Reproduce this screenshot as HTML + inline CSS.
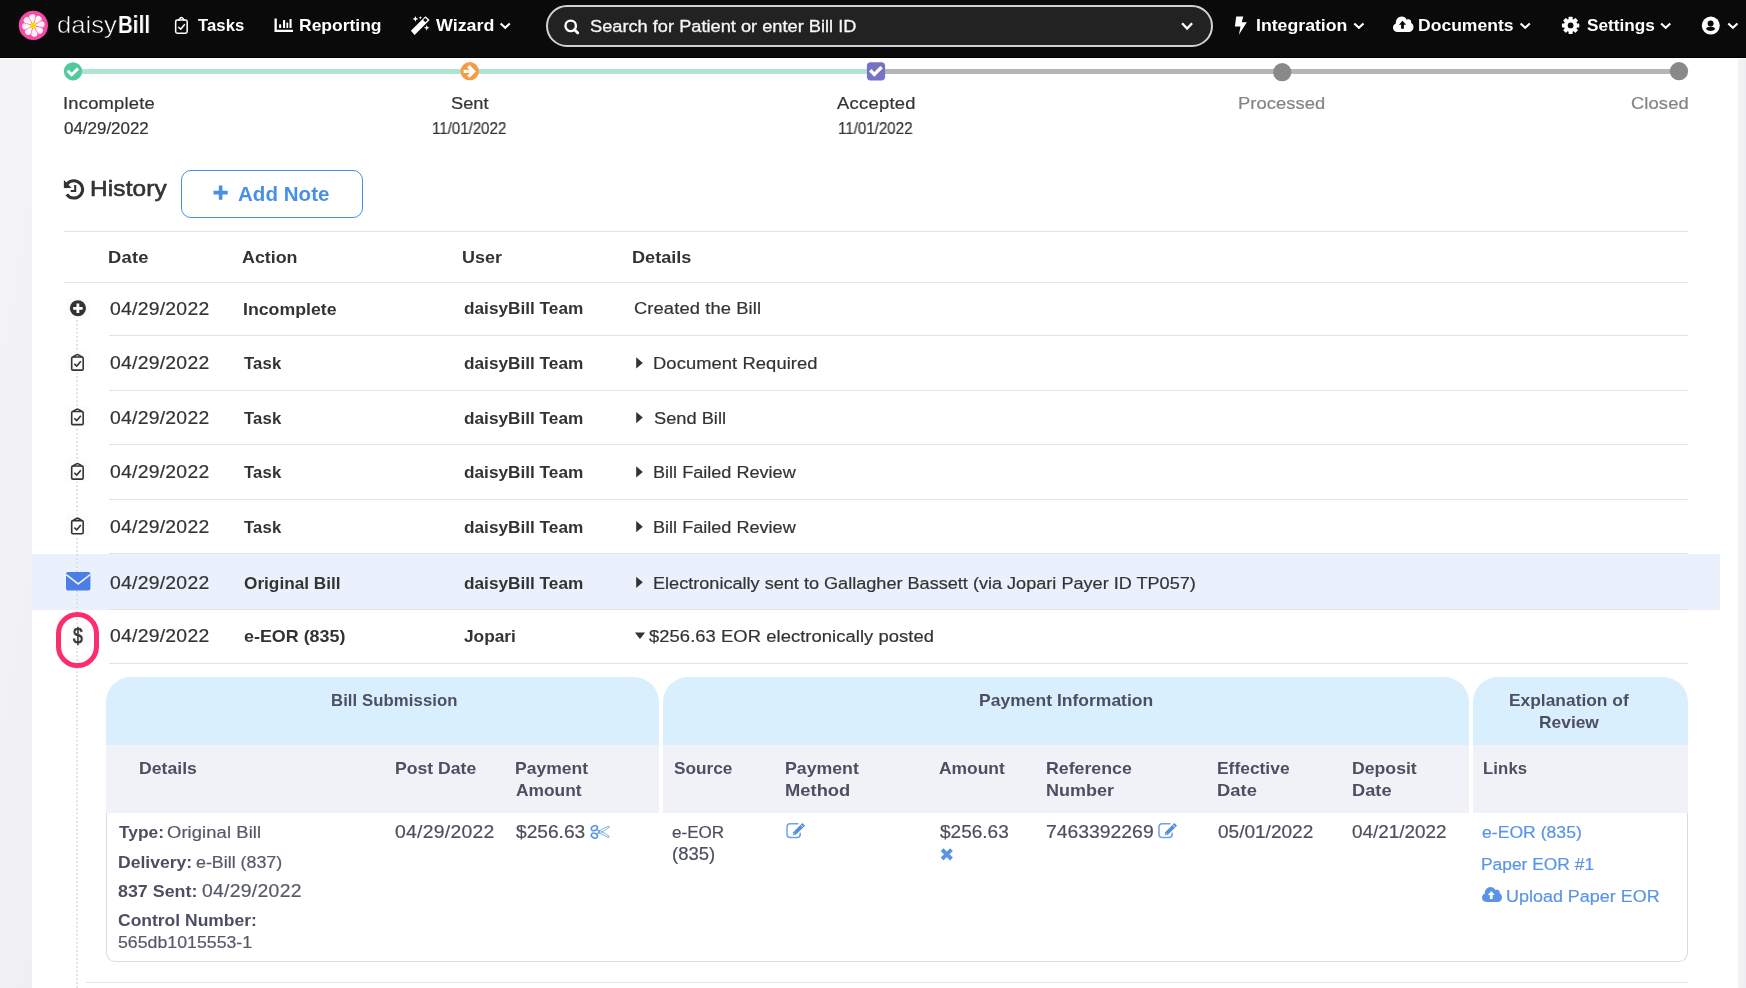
<!DOCTYPE html>
<html lang="en"><head><meta charset="utf-8"><title>daisyBill - Bill History</title>
<style>
*{box-sizing:border-box;margin:0;padding:0}
html,body{width:1746px;height:988px;overflow:hidden;background:#fff}
body{position:relative;font-family:"Liberation Sans",sans-serif;color:#333}
.t{position:absolute;white-space:nowrap;line-height:20px;height:20px;transform-origin:0 50%;will-change:transform}
.i{position:absolute;overflow:visible}
.b{position:absolute}
nav{position:absolute;left:0;top:0;width:1746px;height:57.7px;background:#0a0a0a;border-bottom:1px solid #000}
.search{left:546.2px;top:5.2px;width:666.5px;height:41.6px;border:2px solid #d2d2d2;border-radius:21px;background:#222}
.gl{left:0;top:59px;width:31.9px;height:929px;background:linear-gradient(100deg,#f4f4f7,#f0f0f3)}
.gr{left:1738px;top:59px;width:8px;height:929px;background:linear-gradient(90deg,#f3f3f5,#efeff1)}
.ln{position:absolute;height:1px;background:#e4e4e6}
.hl{left:32px;top:553.6px;width:1688px;height:56px;background:#eaf1fd}

.ib{position:absolute;background:#fcfcfc}
.btn{left:181.2px;top:170.3px;width:181.4px;height:47.4px;border:1.2px solid #4a90e2;border-radius:10px;background:#fff}
.pill{left:55.7px;top:612.2px;width:43.4px;height:56.2px;border:5.4px solid #fb2d6c;border-radius:21.7px}
.ph{position:absolute;top:677px;height:67.8px;background:#d9effe;border-radius:25px 25px 0 0}
.psh{position:absolute;top:744.7px;height:68.2px;background:#f1f2f8}
.pbody{left:106.2px;top:812.9px;width:1581.6px;height:148.8px;border:1px solid #dadae2;border-top:0;border-radius:0 0 9px 9px}
</style></head>
<body>
<div class="b gl"></div><div class="b gr"></div>
<nav><svg class="i" style="left:18px;top:10px" width="32" height="32"><g transform="translate(0.350 0.400)"><defs><linearGradient id="pg" gradientUnits="userSpaceOnUse" x1="12" y1="0" x2="18.2" y2="0"><stop offset="0" stop-color="#ffffff"/><stop offset=".55" stop-color="#fff4fa"/><stop offset="1" stop-color="#ffc9e4"/></linearGradient></defs><circle cx="15" cy="15" r="14.6" fill="#f84aa8"/><path transform="rotate(-6 15 15)" d="M15 14.5 C14.1 11 11.5 7.6 11.9 5.6 C12.3 3.1 17.7 3.1 18.1 5.6 C18.5 7.6 15.9 11 15 14.5Z" fill="url(#pg)"/><path transform="rotate(39 15 15)" d="M15 14.5 C14.1 11 11.5 7.6 11.9 5.6 C12.3 3.1 17.7 3.1 18.1 5.6 C18.5 7.6 15.9 11 15 14.5Z" fill="url(#pg)"/><path transform="rotate(84 15 15)" d="M15 14.5 C14.1 11 11.5 7.6 11.9 5.6 C12.3 3.1 17.7 3.1 18.1 5.6 C18.5 7.6 15.9 11 15 14.5Z" fill="url(#pg)"/><path transform="rotate(129 15 15)" d="M15 14.5 C14.1 11 11.5 7.6 11.9 5.6 C12.3 3.1 17.7 3.1 18.1 5.6 C18.5 7.6 15.9 11 15 14.5Z" fill="url(#pg)"/><path transform="rotate(174 15 15)" d="M15 14.5 C14.1 11 11.5 7.6 11.9 5.6 C12.3 3.1 17.7 3.1 18.1 5.6 C18.5 7.6 15.9 11 15 14.5Z" fill="url(#pg)"/><path transform="rotate(219 15 15)" d="M15 14.5 C14.1 11 11.5 7.6 11.9 5.6 C12.3 3.1 17.7 3.1 18.1 5.6 C18.5 7.6 15.9 11 15 14.5Z" fill="url(#pg)"/><path transform="rotate(264 15 15)" d="M15 14.5 C14.1 11 11.5 7.6 11.9 5.6 C12.3 3.1 17.7 3.1 18.1 5.6 C18.5 7.6 15.9 11 15 14.5Z" fill="url(#pg)"/><path transform="rotate(309 15 15)" d="M15 14.5 C14.1 11 11.5 7.6 11.9 5.6 C12.3 3.1 17.7 3.1 18.1 5.6 C18.5 7.6 15.9 11 15 14.5Z" fill="url(#pg)"/><circle cx="14.8" cy="15.1" r="2.9" fill="#ffd700"/></g></svg><svg class="i" style="left:174px;top:16px" width="16" height="20"><g transform="translate(0.800 0.600) scale(0.9450 0.9449)"><g fill="none" stroke="#fff" stroke-width="1.64" stroke-linejoin="round" stroke-linecap="round"><rect x="0.9" y="3.6" width="12.2" height="14" rx="1.8"/><path d="M4.2 3.5 L5.9 1.5 Q7 0.3 8.1 1.5 L9.8 3.5"/><path d="M3.7 11 L6.3 13.3 L10.6 8.2" stroke-linejoin="miter" stroke-linecap="butt"/></g></g></svg><svg class="i" style="left:274px;top:18px" width="21" height="16"><g transform="translate(0.000 0.000)"><g fill="#fff"><path d="M0.5 0.5h2.3v11.3h16.2v2.3H0.5z"/><rect x="5.1" y="6.2" width="2.1" height="3.9" rx=".5"/><rect x="9" y="2.1" width="2.1" height="8" rx=".5"/><rect x="12.4" y="4.4" width="1.8" height="5.7" rx=".5"/><rect x="15.5" y="0.9" width="2.1" height="9.2" rx=".5"/></g></g></svg><svg class="i" style="left:410px;top:14px" width="22" height="23"><g transform="translate(0.000 0.600)"><g fill="#fff"><path fill-rule="evenodd" d="M0.9 16.1 L15.5 1.7 L19.6 5.3 L4.6 20.5 Z M13.1 5.5 L15.3 3.4 L17.6 5.5 L15.4 7.7 Z"/><path d="M5.4 1.4L6.212 3.488L8.3 4.3L6.212 5.112L5.4 7.2L4.588 5.112L2.5 4.3L4.588 3.488Z"/><path d="M10.4 1.4L10.876 2.624L12.1 3.1L10.876 3.576L10.4 4.8L9.924 3.576L8.7 3.1L9.924 2.624Z"/><path d="M16.7 10.3L17.512 12.388L19.6 13.2L17.512 14.012L16.7 16.1L15.888 14.012L13.8 13.2L15.888 12.388Z"/></g></g></svg><svg class="i" style="left:498px;top:21px" width="15" height="11"><g transform="translate(1.900 1.600)"><path d="M0.7 0.9 L5.3 5.2 L9.9 0.9" fill="none" stroke="#fff" stroke-width="2.1" stroke-linecap="butt" stroke-linejoin="miter"/></g></svg><div class="b search"></div><svg class="i" style="left:564px;top:20px" width="17" height="16"><g transform="translate(0.000 0.000)"><g fill="none" stroke="#fff"><circle cx="6.7" cy="5.9" r="5.25" stroke-width="2.4"/><path d="M10.6 9.7 L13.8 13" stroke-width="2.7" stroke-linecap="round"/></g></g></svg><svg class="i" style="left:1180px;top:21px" width="15" height="11"><g transform="translate(1.400 1.400)"><path d="M0.7 0.9 L5.7 6.2 L10.7 0.9" fill="none" stroke="#fff" stroke-width="2.4" stroke-linecap="butt" stroke-linejoin="miter"/></g></svg><svg class="i" style="left:1234px;top:16px" width="15" height="21"><g transform="translate(0.300 0.400)"><path d="M1.9 0.2 L9 0.2 L7.4 5.9 L12.5 5.9 L4.6 18.4 L6.2 10.1 L0.6 10.1 Z" fill="#fff"/></g></svg><svg class="i" style="left:1352px;top:21px" width="15" height="11"><g transform="translate(1.600 1.600)"><path d="M0.7 0.9 L5.3 5.2 L9.9 0.9" fill="none" stroke="#fff" stroke-width="2.1" stroke-linecap="butt" stroke-linejoin="miter"/></g></svg><svg class="i" style="left:1393px;top:16px" width="22" height="17"><g transform="translate(0.000 0.600)"><path d="M4.4 15.4 C1.9 15.4 0 13.5 0 11.1 C0 9.2 1.1 7.6 2.8 7 C2.6 3.2 5.2 0 8.7 0 C10.9 0 12.7 1.2 13.7 3.1 C14.3 2.8 14.9 2.7 15.5 2.7 C17.3 2.7 18.6 4.3 18.2 6.4 C19.6 7.1 20.5 8.6 20.5 10.4 C20.5 13.2 18.5 15.4 15.8 15.4 Z" fill="#fff"/><path d="M9.5 4.2 L13.1 8.2 L10.9 8.2 L10.9 12.2 L8.1 12.2 L8.1 8.2 L5.9 8.2 Z" fill="#0a0a0a"/></g></svg><svg class="i" style="left:1518px;top:21px" width="15" height="11"><g transform="translate(1.900 1.600)"><path d="M0.7 0.9 L5.3 5.2 L9.9 0.9" fill="none" stroke="#fff" stroke-width="2.1" stroke-linecap="butt" stroke-linejoin="miter"/></g></svg><svg class="i" style="left:1561px;top:16px" width="20" height="20"><g transform="translate(0.800 0.600)"><g fill="#fff"><rect x="6.8" y="0.1" width="4" height="5" rx=".6" transform="rotate(0 8.8 8.8)"/><rect x="6.8" y="0.1" width="4" height="5" rx=".6" transform="rotate(45 8.8 8.8)"/><rect x="6.8" y="0.1" width="4" height="5" rx=".6" transform="rotate(90 8.8 8.8)"/><rect x="6.8" y="0.1" width="4" height="5" rx=".6" transform="rotate(135 8.8 8.8)"/><rect x="6.8" y="0.1" width="4" height="5" rx=".6" transform="rotate(180 8.8 8.8)"/><rect x="6.8" y="0.1" width="4" height="5" rx=".6" transform="rotate(225 8.8 8.8)"/><rect x="6.8" y="0.1" width="4" height="5" rx=".6" transform="rotate(270 8.8 8.8)"/><rect x="6.8" y="0.1" width="4" height="5" rx=".6" transform="rotate(315 8.8 8.8)"/><path fill-rule="evenodd" d="M2.2 8.8a6.6 6.6 0 1 0 13.2 0a6.6 6.6 0 1 0 -13.2 0Z M5.9 8.8a2.9 2.9 0 1 1 5.8 0a2.9 2.9 0 1 1 -5.8 0Z"/></g></g></svg><svg class="i" style="left:1659px;top:21px" width="15" height="11"><g transform="translate(1.400 1.600)"><path d="M0.7 0.9 L5.3 5.2 L9.9 0.9" fill="none" stroke="#fff" stroke-width="2.1" stroke-linecap="butt" stroke-linejoin="miter"/></g></svg><svg class="i" style="left:1701px;top:16px" width="20" height="20"><g transform="translate(0.600 0.400)"><circle cx="9.2" cy="9.2" r="9" fill="#fff"/><circle cx="9" cy="7" r="3" fill="#0a0a0a"/><path d="M4.4 12.6 C5 10.8 7 10.4 9 10.4 C11 10.4 13 10.8 13.6 12.6 C12.5 13.9 10.8 14.6 9 14.6 C7.2 14.6 5.5 13.9 4.4 12.6Z" fill="#0a0a0a"/></g></svg><svg class="i" style="left:1726px;top:21px" width="15" height="11"><g transform="translate(1.600 1.600)"><path d="M0.7 0.9 L5.3 5.2 L9.9 0.9" fill="none" stroke="#fff" stroke-width="2.1" stroke-linecap="butt" stroke-linejoin="miter"/></g></svg>
<span class="t" style="left:56.7px;top:15px;font-size:24px;color:#ffffff;letter-spacing:-0.0px;-webkit-text-stroke:.55px #0a0a0a;transform:scaleX(1.0692)">daisy</span>
<span class="t" style="left:117.51px;top:15px;font-size:24.4px;color:#ffffff;letter-spacing:0.0px;font-weight:700;transform:scaleX(0.8431)">Bill</span>
<span class="t" style="left:198.0px;top:16px;font-size:16.7px;color:#ffffff;letter-spacing:0.041px;font-weight:700">Tasks</span>
<span class="t" style="left:298.81px;top:16px;font-size:16.7px;color:#ffffff;letter-spacing:0.0px;font-weight:700;transform:scaleX(1.0477)">Reporting</span>
<span class="t" style="left:436.0px;top:16px;font-size:16.7px;color:#ffffff;letter-spacing:0.0px;font-weight:700;transform:scaleX(1.0687)">Wizard</span>
<span class="t" style="left:589.53px;top:17px;font-size:16.7px;color:#f6f6f6;letter-spacing:0.0px;-webkit-text-stroke:.3px #f6f6f6;transform:scaleX(1.0921)">Search for Patient or enter Bill ID</span>
<span class="t" style="left:1255.79px;top:16px;font-size:16.7px;color:#ffffff;letter-spacing:0.0px;font-weight:700;transform:scaleX(1.0601)">Integration</span>
<span class="t" style="left:1417.8px;top:16px;font-size:16.7px;color:#ffffff;letter-spacing:0.0px;font-weight:700;transform:scaleX(1.0514)">Documents</span>
<span class="t" style="left:1586.63px;top:16px;font-size:16.7px;color:#ffffff;letter-spacing:0.0px;font-weight:700;transform:scaleX(1.0317)">Settings</span></nav>
<main>
<section><div class="b " style="left:73px;top:69.1px;width:803px;height:4.7px;background:#b2e2d1"></div><div class="b " style="left:876px;top:69.1px;width:803px;height:4.7px;background:#b6b6b6"></div><svg class="i" style="left:63px;top:62px" width="21" height="20"><g transform="translate(0.800 0.100)"><circle cx="9.2" cy="9.2" r="9.15" fill="#54c99f"/><path d="M3.9 8.55 L7.85 12.65 L14.2 6.55" fill="none" stroke="#fff" stroke-width="2.9" stroke-linecap="butt" stroke-linejoin="miter"/></g></svg><svg class="i" style="left:460px;top:62px" width="20" height="20"><g transform="translate(0.550 0.000)"><circle cx="9.2" cy="9.2" r="9.15" fill="#f39c43"/><path d="M3 9.4 H12.4" stroke="#fff" stroke-width="3.1" fill="none"/><path d="M7.8 4.2 L13 9.4 L7.8 14.6" fill="none" stroke="#fff" stroke-width="3.4" stroke-linecap="butt" stroke-linejoin="miter"/></g></svg><svg class="i" style="left:866px;top:62px" width="21" height="20"><g transform="translate(0.800 0.100)"><rect x="0.1" y="0.1" width="18.2" height="18.3" rx="3.7" fill="#7673c6"/><path d="M3.4 8.2 L7.55 12.3 L14.8 5" fill="none" stroke="#fff" stroke-width="3.4" stroke-linecap="butt" stroke-linejoin="miter"/></g></svg><svg class="i" style="left:1273px;top:63px" width="20" height="20"><g transform="translate(0.000 0.000)"><circle cx="9.2" cy="9.2" r="9.1" fill="#898989"/></g></svg><svg class="i" style="left:1669px;top:62px" width="21" height="20"><g transform="translate(0.800 0.000)"><circle cx="9.2" cy="9.2" r="9.1" fill="#898989"/></g></svg>
<span class="t" style="left:62.96px;top:94px;font-size:16.7px;color:#333333;letter-spacing:0.194px;-webkit-text-stroke-width:.2px;transform:scaleX(1.1)">Incomplete</span>
<span class="t" style="left:63.87px;top:119px;font-size:15.6px;color:#333333;letter-spacing:0.0px;-webkit-text-stroke-width:.2px;transform:scaleX(1.0863)">04/29/2022</span>
<span class="t" style="left:450.93px;top:94px;font-size:16.7px;color:#333333;letter-spacing:0.0px;-webkit-text-stroke-width:.2px;transform:scaleX(1.0918)">Sent</span>
<span class="t" style="left:432.26px;top:119px;font-size:15.6px;color:#333333;letter-spacing:0.0px;-webkit-text-stroke-width:.2px;transform:scaleX(0.9667)">11/01/2022</span>
<span class="t" style="left:837.0px;top:94px;font-size:16.7px;color:#333333;letter-spacing:0.252px;-webkit-text-stroke-width:.2px;transform:scaleX(1.1)">Accepted</span>
<span class="t" style="left:838.35px;top:119px;font-size:15.6px;color:#333333;letter-spacing:0.0px;-webkit-text-stroke-width:.2px;transform:scaleX(0.9693)">11/01/2022</span>
<span class="t" style="left:1238.16px;top:94px;font-size:16.7px;color:#848484;letter-spacing:0.043px;-webkit-text-stroke-width:.2px;transform:scaleX(1.1)">Processed</span>
<span class="t" style="left:1630.64px;top:94px;font-size:16.7px;color:#848484;letter-spacing:0.093px;-webkit-text-stroke-width:.2px;transform:scaleX(1.1)">Closed</span></section>
<section><svg class="i" style="left:63px;top:179px" width="23" height="23"><g transform="translate(0.600 0.200)"><g fill="none" stroke="#333"><path d="M1.73 8.69 A8.7 8.7 0 1 1 3.17 15.19" stroke-width="3"/><path d="M11.6 5.9 V11.8 H7.1" stroke-width="2.1"/></g><path d="M0.3 0.8 L0.3 8.8 L8 8.8 Z" fill="#333"/></g></svg><div class="b btn"></div><svg class="i" style="left:213px;top:185px" width="17" height="17"><g transform="translate(0.200 0.200)"><path d="M5.6 0.3h3.6v5.3h5.3v3.6h-5.3v5.3h-3.6v-5.3h-5.3v-3.6h5.3z" fill="#4a90e2"/></g></svg>
<span class="t" style="left:89.99px;top:179px;font-size:22.2px;color:#333333;letter-spacing:0.126px;-webkit-text-stroke:.6px #333;transform:scaleX(1.1)">History</span>
<span class="t" style="left:238.08px;top:184px;font-size:20.5px;color:#4a90e2;letter-spacing:0.047px;font-weight:700">Add Note</span>
<div class="ln" style="left:64px;top:230.7px;width:1624px"></div><div class="ln" style="left:64px;top:281.8px;width:1624px"></div><div class="ln" style="left:109px;top:334.7px;width:1579px"></div><div class="ln" style="left:109px;top:389.7px;width:1579px"></div><div class="ln" style="left:109px;top:443.7px;width:1579px"></div><div class="ln" style="left:109px;top:498.7px;width:1579px"></div><div class="ln" style="left:109px;top:662.7px;width:1579px"></div><div class="b hl"></div><svg class="i" style="left:76px;top:319px" width="3" height="671"><g transform="translate(0.200 0.900)"><line x1="0.85" y1="0" x2="0.85" y2="669" stroke="#dbdada" stroke-width="1.7" stroke-dasharray="1.7 2.34" stroke-dashoffset="-3.9"/></g></svg><div class="ln" style="left:109px;top:552.7px;width:1579px"></div><div class="ln" style="left:109px;top:608.7px;width:1579px"></div>
<span class="t" style="left:107.85px;top:248px;font-size:16.7px;color:#333333;letter-spacing:0.239px;font-weight:700;transform:scaleX(1.1)">Date</span>
<span class="t" style="left:242.32px;top:248px;font-size:16.7px;color:#333333;letter-spacing:-0.0px;font-weight:700;transform:scaleX(1.0691)">Action</span>
<span class="t" style="left:462.46px;top:248px;font-size:16.7px;color:#333333;letter-spacing:0.0px;font-weight:700;transform:scaleX(1.0771)">User</span>
<span class="t" style="left:632.27px;top:248px;font-size:16.7px;color:#333333;letter-spacing:0.0px;font-weight:700;transform:scaleX(1.0859)">Details</span>
<div><div class="ib" style="left:66.4px;top:298.3px;width:22.4px;height:21.2px"></div><svg class="i" style="left:70px;top:300px" width="17" height="18"><g transform="translate(0.100 0.500)"><circle cx="7.8" cy="7.8" r="8.05" fill="#333"/><path d="M6.4 3.1h2.8v3.3h3.3v2.8h-3.3v3.3h-2.8v-3.3h-3.3v-2.8h3.3z" fill="#fff"/></g></svg>
<span class="t" style="left:109.59px;top:299px;font-size:17.6px;color:#333333;letter-spacing:0.232px;-webkit-text-stroke-width:.2px;transform:scaleX(1.1)">04/29/2022</span>
<span class="t" style="left:243.09px;top:300px;font-size:16.7px;color:#333333;letter-spacing:0.0px;font-weight:700;transform:scaleX(1.0623)">Incomplete</span>
<span class="t" style="left:463.86px;top:299px;font-size:16.7px;color:#333333;letter-spacing:0.0px;font-weight:700;transform:scaleX(1.0318)">daisyBill Team</span>
<span class="t" style="left:634.14px;top:299px;font-size:16.7px;color:#333333;letter-spacing:0.09px;-webkit-text-stroke-width:.2px;transform:scaleX(1.1)">Created the Bill</span></div>
<div><div class="ib" style="left:66.0px;top:351.1px;width:22.8px;height:21.7px"></div><svg class="i" style="left:70px;top:353px" width="16" height="19"><g transform="translate(0.850 0.600) scale(0.9400 0.9400)"><g fill="none" stroke="#333" stroke-width="1.7" stroke-linejoin="round" stroke-linecap="round"><rect x="0.9" y="3.6" width="12.2" height="14" rx="1.3"/><path d="M2.6 3.4 L5.9 1.3 Q7 0.5 8.1 1.3 L11.4 3.4"/><path d="M3.7 11 L6.3 13.3 L10.6 8.2" stroke-linejoin="miter" stroke-linecap="butt"/></g></g></svg><svg class="i" style="left:635px;top:356px" width="10" height="15"><g transform="translate(0.800 0.700)"><path d="M0.4 0.6 L7 6.2 L0.4 11.8Z" fill="#333"/></g></svg>
<span class="t" style="left:109.59px;top:353px;font-size:17.6px;color:#333333;letter-spacing:0.232px;-webkit-text-stroke-width:.2px;transform:scaleX(1.1)">04/29/2022</span>
<span class="t" style="left:244.2px;top:354px;font-size:16.7px;color:#333333;letter-spacing:0.123px;font-weight:700">Task</span>
<span class="t" style="left:463.86px;top:354px;font-size:16.7px;color:#333333;letter-spacing:0.0px;font-weight:700;transform:scaleX(1.0318)">daisyBill Team</span>
<span class="t" style="left:652.96px;top:354px;font-size:16.7px;color:#333333;letter-spacing:0.073px;-webkit-text-stroke-width:.2px;transform:scaleX(1.1)">Document Required</span></div>
<div><div class="ib" style="left:66.0px;top:405.6px;width:22.8px;height:21.7px"></div><svg class="i" style="left:70px;top:408px" width="16" height="19"><g transform="translate(0.850 0.100) scale(0.9400 0.9400)"><g fill="none" stroke="#333" stroke-width="1.7" stroke-linejoin="round" stroke-linecap="round"><rect x="0.9" y="3.6" width="12.2" height="14" rx="1.3"/><path d="M2.6 3.4 L5.9 1.3 Q7 0.5 8.1 1.3 L11.4 3.4"/><path d="M3.7 11 L6.3 13.3 L10.6 8.2" stroke-linejoin="miter" stroke-linecap="butt"/></g></g></svg><svg class="i" style="left:635px;top:411px" width="10" height="14"><g transform="translate(0.800 0.400)"><path d="M0.4 0.6 L7 6.2 L0.4 11.8Z" fill="#333"/></g></svg>
<span class="t" style="left:109.59px;top:408px;font-size:17.6px;color:#333333;letter-spacing:0.232px;-webkit-text-stroke-width:.2px;transform:scaleX(1.1)">04/29/2022</span>
<span class="t" style="left:244.2px;top:409px;font-size:16.7px;color:#333333;letter-spacing:0.123px;font-weight:700">Task</span>
<span class="t" style="left:463.86px;top:409px;font-size:16.7px;color:#333333;letter-spacing:0.0px;font-weight:700;transform:scaleX(1.0318)">daisyBill Team</span>
<span class="t" style="left:653.83px;top:409px;font-size:16.7px;color:#333333;letter-spacing:0.0px;-webkit-text-stroke-width:.2px;transform:scaleX(1.0935)">Send Bill</span></div>
<div><div class="ib" style="left:66.0px;top:460.1px;width:22.8px;height:21.7px"></div><svg class="i" style="left:70px;top:462px" width="16" height="19"><g transform="translate(0.850 0.600) scale(0.9400 0.9400)"><g fill="none" stroke="#333" stroke-width="1.7" stroke-linejoin="round" stroke-linecap="round"><rect x="0.9" y="3.6" width="12.2" height="14" rx="1.3"/><path d="M2.6 3.4 L5.9 1.3 Q7 0.5 8.1 1.3 L11.4 3.4"/><path d="M3.7 11 L6.3 13.3 L10.6 8.2" stroke-linejoin="miter" stroke-linecap="butt"/></g></g></svg><svg class="i" style="left:635px;top:465px" width="10" height="15"><g transform="translate(0.800 0.700)"><path d="M0.4 0.6 L7 6.2 L0.4 11.8Z" fill="#333"/></g></svg>
<span class="t" style="left:109.59px;top:462px;font-size:17.6px;color:#333333;letter-spacing:0.232px;-webkit-text-stroke-width:.2px;transform:scaleX(1.1)">04/29/2022</span>
<span class="t" style="left:244.2px;top:463px;font-size:16.7px;color:#333333;letter-spacing:0.123px;font-weight:700">Task</span>
<span class="t" style="left:463.86px;top:463px;font-size:16.7px;color:#333333;letter-spacing:0.0px;font-weight:700;transform:scaleX(1.0318)">daisyBill Team</span>
<span class="t" style="left:652.99px;top:463px;font-size:16.7px;color:#333333;letter-spacing:0.0px;-webkit-text-stroke-width:.2px;transform:scaleX(1.0835)">Bill Failed Review</span></div>
<div><div class="ib" style="left:66.0px;top:514.75px;width:22.8px;height:21.7px"></div><svg class="i" style="left:70px;top:517px" width="16" height="19"><g transform="translate(0.850 0.250) scale(0.9400 0.9400)"><g fill="none" stroke="#333" stroke-width="1.7" stroke-linejoin="round" stroke-linecap="round"><rect x="0.9" y="3.6" width="12.2" height="14" rx="1.3"/><path d="M2.6 3.4 L5.9 1.3 Q7 0.5 8.1 1.3 L11.4 3.4"/><path d="M3.7 11 L6.3 13.3 L10.6 8.2" stroke-linejoin="miter" stroke-linecap="butt"/></g></g></svg><svg class="i" style="left:635px;top:520px" width="10" height="14"><g transform="translate(0.800 0.500)"><path d="M0.4 0.6 L7 6.2 L0.4 11.8Z" fill="#333"/></g></svg>
<span class="t" style="left:109.59px;top:517px;font-size:17.6px;color:#333333;letter-spacing:0.232px;-webkit-text-stroke-width:.2px;transform:scaleX(1.1)">04/29/2022</span>
<span class="t" style="left:244.2px;top:518px;font-size:16.7px;color:#333333;letter-spacing:0.123px;font-weight:700">Task</span>
<span class="t" style="left:463.86px;top:518px;font-size:16.7px;color:#333333;letter-spacing:0.0px;font-weight:700;transform:scaleX(1.0318)">daisyBill Team</span>
<span class="t" style="left:652.99px;top:518px;font-size:16.7px;color:#333333;letter-spacing:0.0px;-webkit-text-stroke-width:.2px;transform:scaleX(1.0835)">Bill Failed Review</span></div>
<div><svg class="i" style="left:66px;top:572px" width="26" height="20"><g transform="translate(0.000 0.000)"><rect x="0" y="0" width="24.4" height="18.6" rx="2" fill="#4b7fe3"/><path d="M0.2 2.6 L12.2 11.9 L24.2 2.6" fill="none" stroke="#eaf1fd" stroke-width="1.7"/></g></svg><svg class="i" style="left:635px;top:576px" width="10" height="14"><g transform="translate(0.800 0.100)"><path d="M0.4 0.6 L7 6.2 L0.4 11.8Z" fill="#333"/></g></svg>
<span class="t" style="left:109.59px;top:573px;font-size:17.6px;color:#333333;letter-spacing:0.232px;-webkit-text-stroke-width:.2px;transform:scaleX(1.1)">04/29/2022</span>
<span class="t" style="left:243.66px;top:574px;font-size:16.7px;color:#333333;letter-spacing:0.0px;font-weight:700;transform:scaleX(1.0314)">Original Bill</span>
<span class="t" style="left:463.86px;top:574px;font-size:16.7px;color:#333333;letter-spacing:0.0px;font-weight:700;transform:scaleX(1.0318)">daisyBill Team</span>
<span class="t" style="left:652.99px;top:574px;font-size:16.7px;color:#333333;letter-spacing:-0.0px;-webkit-text-stroke-width:.2px;transform:scaleX(1.0845)">Electronically sent to Gallagher Bassett (via Jopari Payer ID TP057)</span></div>
<div><div class="ib" style="left:66.0px;top:624.75px;width:23.1px;height:23.1px"></div><div class="b pill"></div><svg class="i" style="left:634px;top:632px" width="13" height="9"><g transform="translate(0.600 0.200)"><path d="M0.3 0.4 L10.5 0.4 L5.4 6.9Z" fill="#333"/></g></svg>
<span class="t" style="left:109.59px;top:626px;font-size:17.6px;color:#333333;letter-spacing:0.232px;-webkit-text-stroke-width:.2px;transform:scaleX(1.1)">04/29/2022</span>
<span class="t" style="left:243.64px;top:627px;font-size:16.7px;color:#333333;letter-spacing:0.0px;font-weight:700;transform:scaleX(1.0723)">e-EOR (835)</span>
<span class="t" style="left:464.4px;top:627px;font-size:16.7px;color:#333333;letter-spacing:0.0px;font-weight:700;transform:scaleX(1.036)">Jopari</span>
<span class="t" style="left:649.2px;top:627px;font-size:16.7px;color:#333333;letter-spacing:0.067px;-webkit-text-stroke-width:.2px;transform:scaleX(1.1)">$256.63 EOR electronically posted</span>
<span class="t" style="left:72.8px;top:626px;font-size:22px;color:#333333;letter-spacing:-0.031px;-webkit-text-stroke:.7px #333;transform:scaleX(0.8)">$</span></div>
</section>
<section><div class="ph" style="left:106px;width:552.9px"></div><div class="ph" style="left:663.3px;width:805.5px"></div><div class="ph" style="left:1473.2px;width:214.4px"></div><div class="psh" style="left:106px;width:552.9px"></div><div class="psh" style="left:663.3px;width:805.5px"></div><div class="psh" style="left:1473.2px;width:214.4px"></div><div class="b pbody"></div><svg class="i" style="left:590px;top:824px" width="21" height="17"><g transform="translate(0.200 0.600)"><g fill="none" stroke="#5b94e6"><ellipse cx="4.2" cy="3.5" rx="3.2" ry="2.35" transform="rotate(-24 4.2 3.5)" stroke-width="1.6"/><ellipse cx="4.2" cy="11" rx="3.2" ry="2.35" transform="rotate(24 4.2 11)" stroke-width="1.6"/><path d="M6.9 5.4 L10 7.25 M6.9 9.1 L10 7.25" stroke-width="1.2"/><path d="M8.6 6.3 L17.9 1.7 Q19.4 1.6 18.9 2.9 L10.6 8.3 M8.6 8.2 L17.9 12.8 Q19.4 12.9 18.9 11.6 L10.6 6.2" stroke-width=".85" opacity=".9"/></g></g></svg><svg class="i" style="left:786px;top:822px" width="21" height="18"><g transform="translate(0.200 0.800)"><path d="M12.3 1 H3.7 A2.9 2.9 0 0 0 0.8 3.9 V11.7 A2.9 2.9 0 0 0 3.7 14.6 H11.1 A2.9 2.9 0 0 0 14 11.7 V9.9" fill="none" stroke="#6ea1ec" stroke-width="1.5"/><path d="M6.5 12.4 L7 9.5 L16.1 0.3 L18.9 2.9 L9.6 12 Z" fill="#548ee4"/><path d="M14.3 1.9 L17.1 4.6" stroke="#fff" stroke-width=".8"/><circle cx="7.9" cy="11" r=".6" fill="#fff"/></g></svg><svg class="i" style="left:940px;top:847px" width="15" height="15"><g transform="translate(0.200 0.700)"><path d="M1.9 1.9 L11.3 11.3 M11.3 1.9 L1.9 11.3" stroke="#5b94e6" stroke-width="3.9" stroke-linecap="butt"/></g></svg><svg class="i" style="left:1158px;top:822px" width="21" height="18"><g transform="translate(0.200 0.800)"><path d="M12.3 1 H3.7 A2.9 2.9 0 0 0 0.8 3.9 V11.7 A2.9 2.9 0 0 0 3.7 14.6 H11.1 A2.9 2.9 0 0 0 14 11.7 V9.9" fill="none" stroke="#6ea1ec" stroke-width="1.5"/><path d="M6.5 12.4 L7 9.5 L16.1 0.3 L18.9 2.9 L9.6 12 Z" fill="#548ee4"/><path d="M14.3 1.9 L17.1 4.6" stroke="#fff" stroke-width=".8"/><circle cx="7.9" cy="11" r=".6" fill="#fff"/></g></svg><svg class="i" style="left:1482px;top:887px" width="21" height="17"><g transform="translate(0.000 0.000) scale(0.9751 0.9753)"><path d="M4.4 15.4 C1.9 15.4 0 13.5 0 11.1 C0 9.2 1.1 7.6 2.8 7 C2.6 3.2 5.2 0 8.7 0 C10.9 0 12.7 1.2 13.7 3.1 C14.3 2.8 14.9 2.7 15.5 2.7 C17.3 2.7 18.6 4.3 18.2 6.4 C19.6 7.1 20.5 8.6 20.5 10.4 C20.5 13.2 18.5 15.4 15.8 15.4 Z" fill="#5b94e6"/><path d="M9.5 4.2 L13.1 8.2 L10.9 8.2 L10.9 12.2 L8.1 12.2 L8.1 8.2 L5.9 8.2 Z" fill="#fff"/></g></svg>
<span class="t" style="left:330.86px;top:691px;font-size:16.7px;color:#4d4f60;letter-spacing:0.092px;font-weight:700">Bill Submission</span>
<span class="t" style="left:978.9px;top:691px;font-size:16.7px;color:#4d4f60;letter-spacing:0.0px;font-weight:700;transform:scaleX(1.0497)">Payment Information</span>
<span class="t" style="left:1509.21px;top:691px;font-size:16.7px;color:#4d4f60;letter-spacing:0.0px;font-weight:700;transform:scaleX(1.0413)">Explanation of</span>
<span class="t" style="left:1539.01px;top:713px;font-size:16.7px;color:#4d4f60;letter-spacing:0.0px;font-weight:700;transform:scaleX(1.0413)">Review</span>
<span class="t" style="left:139.3px;top:759px;font-size:16.7px;color:#4d4f60;letter-spacing:0.0px;font-weight:700;transform:scaleX(1.0576)">Details</span>
<span class="t" style="left:394.7px;top:759px;font-size:16.7px;color:#4d4f60;letter-spacing:0.0px;font-weight:700;transform:scaleX(1.056)">Post Date</span>
<span class="t" style="left:515.1px;top:759px;font-size:16.7px;color:#4d4f60;letter-spacing:0.0px;font-weight:700;transform:scaleX(1.0498)">Payment</span>
<span class="t" style="left:515.93px;top:781px;font-size:16.7px;color:#4d4f60;letter-spacing:-0.0px;font-weight:700;transform:scaleX(1.041)">Amount</span>
<span class="t" style="left:674.03px;top:759px;font-size:16.7px;color:#4d4f60;letter-spacing:0.0px;font-weight:700;transform:scaleX(1.0315)">Source</span>
<span class="t" style="left:785.39px;top:759px;font-size:16.7px;color:#4d4f60;letter-spacing:0.0px;font-weight:700;transform:scaleX(1.0615)">Payment</span>
<span class="t" style="left:785.35px;top:781px;font-size:16.7px;color:#4d4f60;letter-spacing:0.004px;font-weight:700;transform:scaleX(1.1)">Method</span>
<span class="t" style="left:939.13px;top:759px;font-size:16.7px;color:#4d4f60;letter-spacing:-0.0px;font-weight:700;transform:scaleX(1.0441)">Amount</span>
<span class="t" style="left:1045.99px;top:759px;font-size:16.7px;color:#4d4f60;letter-spacing:0.0px;font-weight:700;transform:scaleX(1.063)">Reference</span>
<span class="t" style="left:1045.98px;top:781px;font-size:16.7px;color:#4d4f60;letter-spacing:0.0px;font-weight:700;transform:scaleX(1.0774)">Number</span>
<span class="t" style="left:1217.31px;top:759px;font-size:16.7px;color:#4d4f60;letter-spacing:-0.0px;font-weight:700;transform:scaleX(1.0432)">Effective</span>
<span class="t" style="left:1217.25px;top:781px;font-size:16.7px;color:#4d4f60;letter-spacing:0.027px;font-weight:700;transform:scaleX(1.1)">Date</span>
<span class="t" style="left:1352.1px;top:759px;font-size:16.7px;color:#4d4f60;letter-spacing:0.0px;font-weight:700;transform:scaleX(1.058)">Deposit</span>
<span class="t" style="left:1352.06px;top:781px;font-size:16.7px;color:#4d4f60;letter-spacing:0.0px;font-weight:700;transform:scaleX(1.0939)">Date</span>
<span class="t" style="left:1483.36px;top:759px;font-size:16.7px;color:#4d4f60;letter-spacing:0.126px;font-weight:700">Links</span>
<span class="t" style="left:118.8px;top:823px;font-size:16.7px;color:#4d4f60;letter-spacing:0.0px;font-weight:700;transform:scaleX(1.0379)">Type:</span>
<span class="t" style="left:167.44px;top:823px;font-size:16.7px;color:#565968;letter-spacing:0.096px;-webkit-text-stroke-width:.2px;transform:scaleX(1.1)">Original Bill</span>
<span class="t" style="left:117.7px;top:853px;font-size:16.7px;color:#4d4f60;letter-spacing:0.0px;font-weight:700;transform:scaleX(1.0525)">Delivery:</span>
<span class="t" style="left:195.64px;top:853px;font-size:16.7px;color:#565968;letter-spacing:0.0px;-webkit-text-stroke-width:.2px;transform:scaleX(1.0686)">e-Bill (837)</span>
<span class="t" style="left:118.24px;top:882px;font-size:16.7px;color:#4d4f60;letter-spacing:0.0px;font-weight:700;transform:scaleX(1.0699)">837 Sent:</span>
<span class="t" style="left:201.8px;top:881px;font-size:17.6px;color:#565968;letter-spacing:0.262px;-webkit-text-stroke-width:.2px;transform:scaleX(1.1)">04/29/2022</span>
<span class="t" style="left:118.25px;top:911px;font-size:16.7px;color:#4d4f60;letter-spacing:0.0px;font-weight:700;transform:scaleX(1.0478)">Control Number:</span>
<span class="t" style="left:118.25px;top:933px;font-size:17.1px;color:#565968;letter-spacing:0.0px;-webkit-text-stroke-width:.2px;transform:scaleX(1.0375)">565db1015553-1</span>
<span class="t" style="left:394.89px;top:822px;font-size:17.6px;color:#4d4f60;letter-spacing:0.242px;-webkit-text-stroke-width:.2px;transform:scaleX(1.1)">04/29/2022</span>
<span class="t" style="left:516.2px;top:822px;font-size:17.6px;color:#4d4f60;letter-spacing:0.0px;-webkit-text-stroke-width:.2px;transform:scaleX(1.0889)">$256.63</span>
<span class="t" style="left:671.87px;top:823px;font-size:16.7px;color:#4d4f60;letter-spacing:0.0px;-webkit-text-stroke-width:.2px;transform:scaleX(1.0233)">e-EOR</span>
<span class="t" style="left:671.53px;top:844px;font-size:17.6px;color:#4d4f60;letter-spacing:0.0px;-webkit-text-stroke-width:.2px;transform:scaleX(1.0495)">(835)</span>
<span class="t" style="left:940.1px;top:822px;font-size:17.6px;color:#4d4f60;letter-spacing:-0.0px;-webkit-text-stroke-width:.2px;transform:scaleX(1.081)">$256.63</span>
<span class="t" style="left:1046.19px;top:822px;font-size:17.6px;color:#4d4f60;letter-spacing:0.002px;-webkit-text-stroke-width:.2px;transform:scaleX(1.1)">7463392269</span>
<span class="t" style="left:1217.81px;top:822px;font-size:17.6px;color:#4d4f60;letter-spacing:0.0px;-webkit-text-stroke-width:.2px;transform:scaleX(1.0815)">05/01/2022</span>
<span class="t" style="left:1352.31px;top:822px;font-size:17.6px;color:#4d4f60;letter-spacing:0.0px;-webkit-text-stroke-width:.2px;transform:scaleX(1.0735)">04/21/2022</span>
<span class="t" style="left:1481.55px;top:823px;font-size:16.7px;color:#5b94e6;letter-spacing:-0.0px;-webkit-text-stroke-width:.2px;transform:scaleX(1.0549)">e-EOR (835)</span>
<span class="t" style="left:1480.74px;top:855px;font-size:16.7px;color:#5b94e6;letter-spacing:0.0px;-webkit-text-stroke-width:.2px;transform:scaleX(1.042)">Paper EOR #1</span>
<span class="t" style="left:1506.28px;top:887px;font-size:16.7px;color:#5b94e6;letter-spacing:0.0px;-webkit-text-stroke-width:.2px;transform:scaleX(1.0755)">Upload Paper EOR</span><div class="ln" style="left:86px;top:981.9px;width:1602px"></div></section>
</main>
</body></html>
